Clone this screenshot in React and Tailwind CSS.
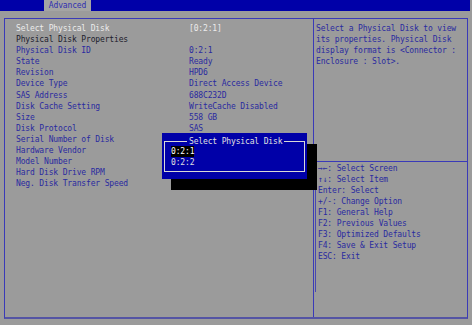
export default function App() {
  const rows = [
    ["Select Physical Disk", "[0:2:1]", "sel"],
    ["Physical Disk Properties", "", "hdr"],
    ["Physical Disk ID", "0:2:1"],
    ["State", "Ready"],
    ["Revision", "HPD6"],
    ["Device Type", "Direct Access Device"],
    ["SAS Address", "688C232D"],
    ["Disk Cache Setting", "WriteCache Disabled"],
    ["Size", "558 GB"],
    ["Disk Protocol", "SAS"],
    ["Serial Number of Disk", ""],
    ["Hardware Vendor", ""],
    ["Model Number", ""],
    ["Hard Disk Drive RPM", ""],
    ["Neg. Disk Transfer Speed", ""],
  ];
  const keys = [
    "\u2192\u2190: Select Screen",
    "\u2191\u2193: Select Item",
    "Enter: Select",
    "+/-: Change Option",
    "F1: General Help",
    "F2: Previous Values",
    "F3: Optimized Defaults",
    "F4: Save & Exit Setup",
    "ESC: Exit",
  ];
  return (
    <div
      className="relative w-[472px] h-[325px] overflow-hidden bg-[#9b9b9b] text-[8px] tracking-[-0.15px] text-[#2a2aa0]"
      style={{ fontFamily: '"DejaVu Sans Mono", "Liberation Mono", monospace' }}
    >
      <div className="h-[11px] bg-[#0000a8] flex mr-[2px]">
        <div className="ml-[44px] w-[47px] bg-[#a4a4a4] text-[#3030b0] leading-[11px] text-center">
          Advanced
        </div>
      </div>
      <div className="mx-[4px] mt-[7px] h-[301px] border border-[#3a3ab8] border-b-2 border-b-[#5454a4] flex">
        <div className="w-[309px] border-r border-[#3a3ab8] pl-[11px] pt-[4px] leading-[11.1px]">
          {rows.map(([l, v, t], i) => (
            <div key={i} className="flex h-[11.1px] whitespace-pre">
              <div
                className={
                  "w-[173px] " +
                  (t === "sel" ? "text-[#ececec]" : t === "hdr" ? "text-[#1c1c2c]" : "")
                }
              >
                {l}
              </div>
              <div className={t === "sel" ? "text-[#ececec]" : ""}>{v}</div>
            </div>
          ))}
        </div>
        <div className="flex-1 flex flex-col">
          <div className="h-[143px] border-b border-[#3a3ab8] pl-[2px] pt-[4px] leading-[11px] whitespace-pre">
            <div>Select a Physical Disk to view</div>
            <div>its properties. Physical Disk</div>
            <div>display format is &lt;Connector :</div>
            <div>Enclosure : Slot&gt;.</div>
          </div>
          <div className="flex-1 flex">
            <div className="w-[1px] h-[130px] bg-[#4848b0] ml-[1px]"></div>
            <div className="pl-[2px] pt-[1px] leading-[11px] whitespace-pre">
              {keys.map((k, i) => (
                <div key={i}>{k}</div>
              ))}
            </div>
          </div>
        </div>
      </div>
      {/* popup */}
      <div className="absolute left-[171px] top-[144px] w-[146px] h-[46px] bg-black"></div>
      <div className="absolute left-[162px] top-[133px] w-[145px] h-[46px] bg-[#0000a8] text-[#e0e0e0]">
        <div className="absolute left-[2px] right-[2px] top-[8px] bottom-[7px] border border-[#d8d8d8]"></div>
        <div className="absolute left-[25px] top-[3px] px-[2px] bg-[#0000a8] leading-[11px]">
          Select Physical Disk
        </div>
        <div className="absolute left-[9px] top-[13px] leading-[11px]">
          <div className="bg-black text-white w-fit">0:2:1</div>
          <div>0:2:2</div>
        </div>
      </div>
    </div>
  );
}
